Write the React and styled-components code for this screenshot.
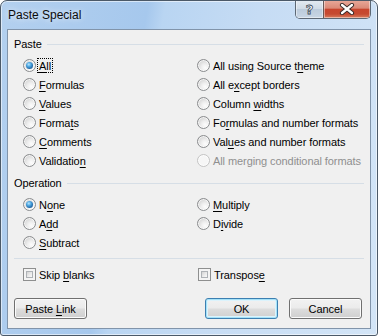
import React from "react";
import styled, { createGlobalStyle, css } from "styled-components";

const Global = createGlobalStyle`
  html, body { margin: 0; padding: 0; background: #ffffff; }
  * { box-sizing: border-box; }
`;

const Window = styled.div`
  width: 378px;
  height: 336px;
  border: 1px solid #4b5968;
  border-radius: 7px 7px 3px 3px;
  background: linear-gradient(100deg, #b3d0ef 0%, #a6c8ed 34%, #b9d5f2 38%, #c6dcf4 60%, #d3e5f7 100%);
  box-shadow: inset 0 0 0 1px rgba(255, 255, 255, 0.55);
  display: flex;
  flex-direction: column;
  font-family: "Liberation Sans", Arial, sans-serif;
  font-size: 11px;
  letter-spacing: -0.08px;
  color: #000;
  overflow: hidden;
`;

const TitleBar = styled.div`
  height: 28px;
  display: flex;
  justify-content: space-between;
  padding-left: 7px;
  padding-right: 6px;
`;

const Title = styled.div`
  align-self: center;
  font-size: 12px;
  letter-spacing: 0;
  color: #0c0c0c;
  text-shadow: 0 0 6px rgba(255, 255, 255, 0.9);
`;

const Caption = styled.div`
  display: flex;
  height: 19px;
  margin-top: -1px;
  border: 1px solid #5d6874;
  border-top: none;
  border-radius: 0 0 5px 5px;
  overflow: hidden;
`;

const CapBtn = styled.div`
  height: 100%;
  display: flex;
  align-items: center;
  justify-content: center;
  width: ${(p) => p.$w}px;
  background: ${(p) => p.$bg};
  box-shadow: inset 0 0 0 1px rgba(255, 255, 255, 0.45);
  & + & { border-left: 1px solid #6a5a58; }
`;

const HelpMark = styled.span`
  font-family: "DejaVu Sans", sans-serif;
  font-weight: bold;
  font-size: 13px;
  color: #ffffff;
  -webkit-text-stroke: 0.8px #3d4a57;
  line-height: 1;
  margin-top: 1px;
`;

const Client = styled.div`
  margin: 0 6px;
  height: 300px;
  border: 1px solid #8194aa;
  background: #f0f0f0;
  padding: 7px 6px 0 6px;
  display: flex;
  flex-direction: column;
`;

const GroupHeader = styled.div`
  height: 14px;
  line-height: 14px;
  display: flex;
  align-items: center;
  gap: 5px;
  margin-top: ${(p) => p.$top || 0}px;
  margin-bottom: 5px;
  &::after {
    content: "";
    flex: 1;
    height: 1px;
    background: #d6dee6;
  }
`;

const OptionGrid = styled.div`
  display: grid;
  grid-template-columns: 174px 1fr;
  grid-template-rows: repeat(${(p) => p.$rows}, 19px);
  grid-auto-flow: column;
  padding-left: 9px;
  margin-top: ${(p) => p.$top || 0}px;
`;

const Option = styled.div`
  display: flex;
  align-items: center;
  gap: 3px;
  color: ${(p) => (p.$disabled ? "#8f8f8f" : "#000")};
  white-space: nowrap;
`;

const Radio = styled.span`
  width: 13px;
  height: 13px;
  flex: none;
  border-radius: 50%;
  position: relative;
  border: 1px solid ${(p) => (p.$disabled ? "#c4c4c4" : "#8a8c8e")};
  background: ${(p) =>
    p.$disabled
      ? "#f6f6f6"
      : "radial-gradient(circle at 65% 70%, #fdfdfd 0%, #eeeeee 35%, #d2d2d2 80%, #c8c8c8 100%)"};
  box-shadow: inset 0 0 0 1px rgba(255, 255, 255, 0.7);
  ${(p) =>
    p.$checked &&
    css`
      &::after {
        content: "";
        position: absolute;
        left: 2px;
        top: 2px;
        width: 7px;
        height: 7px;
        border-radius: 50%;
        background: radial-gradient(circle at 40% 35%, #b6e6ff 0%, #4ea6e0 35%, #1c5f9e 75%, #0f3c6c 100%);
      }
    `}
`;

const Check = styled.span`
  width: 13px;
  height: 13px;
  flex: none;
  position: relative;
  border: 1px solid #8e8f8f;
  background: #f4f4f4;
  &::after {
    content: "";
    position: absolute;
    left: 2px;
    top: 2px;
    right: 2px;
    bottom: 2px;
    border: 1px solid #aeb2b6;
    background: linear-gradient(135deg, #d3d3d3 0%, #e9e9e9 50%, #fafafa 100%);
  }
`;

const Label = styled.span`
  ${(p) =>
    p.$focus &&
    css`
      outline: 1px dotted #000;
      outline-offset: 0;
      padding: 1px 1px 0;
      margin-left: -1px;
    `}
`;

const Mn = styled.span`
  text-decoration: underline;
  text-underline-offset: 2px;
`;

const Separator = styled.div`
  height: 1px;
  background: #d6dee6;
  margin-top: 6px;
`;

const CheckGrid = styled.div`
  display: grid;
  grid-template-columns: 175px 1fr;
  grid-template-rows: 19px;
  padding-left: 9px;
  margin-top: 6px;
`;

const ButtonRow = styled.div`
  display: flex;
  margin-top: 14px;
  padding-right: 2px;
  gap: 11px;
`;

const Button = styled.div`
  width: 73px;
  height: 21px;
  border: 1px solid ${(p) => (p.$default ? "#3c7fb1" : "#707070")};
  border-radius: 3px;
  display: flex;
  align-items: center;
  justify-content: center;
  background: linear-gradient(#f2f2f2 0%, #ebebeb 48%, #dddddd 52%, #cfcfcf 100%);
  box-shadow: ${(p) =>
    p.$default
      ? "inset 0 0 0 1px #a6e2f8, inset 0 0 0 2px #dcf3fc"
      : "inset 0 0 0 1px #fbfbfb"};
  margin-right: ${(p) => (p.$push ? "auto" : "0")};
`;

const paste = [
  [<><Mn>A</Mn>ll</>, true, false, true],
  [<><Mn>F</Mn>ormulas</>],
  [<><Mn>V</Mn>alues</>],
  [<>Forma<Mn>t</Mn>s</>],
  [<><Mn>C</Mn>omments</>],
  [<>Validatio<Mn>n</Mn></>],
  [<>All using Source t<Mn>h</Mn>eme</>],
  [<>All e<Mn>x</Mn>cept borders</>],
  [<>Column <Mn>w</Mn>idths</>],
  [<>Fo<Mn>r</Mn>mulas and number formats</>],
  [<>Val<Mn>u</Mn>es and number formats</>],
  [<>All merging conditional formats</>, false, true],
];

const ops = [
  [<>N<Mn>o</Mn>ne</>, true],
  [<>A<Mn>d</Mn>d</>],
  [<><Mn>S</Mn>ubtract</>],
  [<><Mn>M</Mn>ultiply</>],
  [<>D<Mn>i</Mn>vide</>],
];

function RadioOption({ label, checked, disabled, focus }) {
  return (
    <Option $disabled={disabled}>
      <Radio $checked={checked} $disabled={disabled} />
      <Label $focus={focus}>{label}</Label>
    </Option>
  );
}

export default function App() {
  return (
    <>
      <Global />
      <Window>
        <TitleBar>
          <Title>Paste Special</Title>
          <Caption>
            <CapBtn $w={27} $bg="linear-gradient(#e4ebf2 0%, #d0dbe6 48%, #bccbdb 52%, #c9d6e4 100%)">
              <HelpMark>?</HelpMark>
            </CapBtn>
            <CapBtn $w={47} $bg="linear-gradient(#e9aa9b 0%, #db8a78 45%, #c8452e 52%, #c64a31 78%, #d97d5e 100%)">
              <svg width="16" height="12" viewBox="0 0 16 12">
                <path d="M3 2 L13 10 M13 2 L3 10" stroke="#3b2a28" strokeWidth="4.2" strokeLinecap="round" />
                <path d="M3 2 L13 10 M13 2 L3 10" stroke="#ffffff" strokeWidth="2.3" strokeLinecap="round" />
              </svg>
            </CapBtn>
          </Caption>
        </TitleBar>
        <Client>
          <GroupHeader>Paste</GroupHeader>
          <OptionGrid $rows={6}>
            {paste.map(([label, checked, disabled, focus], i) => (
              <RadioOption key={i} label={label} checked={checked} disabled={disabled} focus={focus} />
            ))}
          </OptionGrid>
          <GroupHeader $top={6}>Operation</GroupHeader>
          <OptionGrid $rows={3}>
            {ops.map(([label, checked], i) => (
              <RadioOption key={i} label={label} checked={checked} />
            ))}
          </OptionGrid>
          <Separator />
          <CheckGrid>
            <Option>
              <Check />
              <Label>Skip <Mn>b</Mn>lanks</Label>
            </Option>
            <Option>
              <Check />
              <Label>Transpos<Mn>e</Mn></Label>
            </Option>
          </CheckGrid>
          <ButtonRow>
            <Button $push><Label>Paste <Mn>L</Mn>ink</Label></Button>
            <Button $default><Label>OK</Label></Button>
            <Button><Label>Cancel</Label></Button>
          </ButtonRow>
        </Client>
      </Window>
    </>
  );
}
